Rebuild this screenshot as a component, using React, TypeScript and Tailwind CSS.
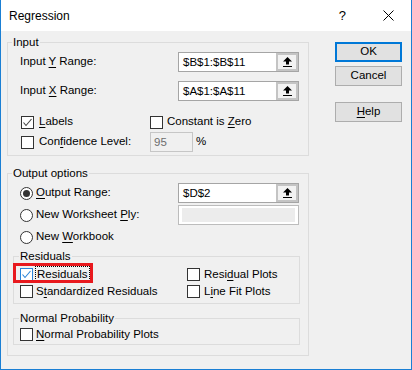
import React from "react";

const ACCENT = "#1a7fd4";

function Key({ children }: { children: React.ReactNode }) {
  return <span className="underline underline-offset-[2px] decoration-1">{children}</span>;
}

function CheckBox({ checked = false, focus = false }: { checked?: boolean; focus?: boolean }) {
  return (
    <span
      className={`w-[13px] h-[13px] shrink-0 bg-white border flex items-center justify-center ${
        focus ? "border-[#2b84d8]" : "border-[#333333]"
      }`}
    >
      {checked && (
        <svg width="11" height="11" viewBox="0 0 11 11">
          <polyline
            points="1.5,5.5 4,8.5 9.5,2"
            fill="none"
            stroke={focus ? "#2b84d8" : "#444444"}
            strokeWidth="1.1"
          />
        </svg>
      )}
    </span>
  );
}

function Radio({ checked = false }: { checked?: boolean }) {
  return (
    <span className="w-[13px] h-[13px] shrink-0 rounded-full bg-white border border-[#333333] flex items-center justify-center">
      {checked && <span className="w-[7px] h-[7px] rounded-full bg-[#333333]" />}
    </span>
  );
}

function RefButton() {
  return (
    <span className="w-[22px] h-full border-2 border-[#c4c4c4] bg-[#f2f2f2] flex items-center justify-center">
      <svg width="9" height="10" viewBox="0 0 9 10">
        <polygon points="4.5,0 9,4.5 6,4.5 6,7.5 3,7.5 3,4.5 0,4.5" fill="#000" />
        <rect x="0" y="9" width="9" height="1" fill="#000" />
      </svg>
    </span>
  );
}

function RefInput({ value }: { value: string }) {
  return (
    <div className="w-[121px] h-[20px] border border-[#a5a5a5] bg-white flex">
      <span className="flex-1 pl-[4px] leading-[18px]">{value}</span>
      <RefButton />
    </div>
  );
}

function Button({ children, primary = false }: { children: React.ReactNode; primary?: boolean }) {
  return (
    <div
      className={`w-[67px] h-[20px] bg-[#e1e1e1] flex items-center justify-center ${
        primary ? "border-2 border-[#0078d7]" : "border border-[#adadad]"
      }`}
    >
      {children}
    </div>
  );
}

export default function App() {
  return (
    <div className="w-[412px] h-[370px] bg-[#f0f0f0] border-x border-b flex flex-col text-[11.5px] text-black font-['Liberation_Sans',Arial,sans-serif]" style={{ borderColor: ACCENT }}>
      {/* title bar */}
      <div className="h-[31px] shrink-0 bg-white flex items-center pl-[8px] pr-[17px]">
        <span className="text-[12px]">Regression</span>
        <span className="ml-auto text-[13px]">?</span>
        <svg className="ml-[37px]" width="11" height="11" viewBox="0 0 11 11">
          <path d="M0.5 0.5 L10.5 10.5 M10.5 0.5 L0.5 10.5" stroke="#000" strokeWidth="1" />
        </svg>
      </div>

      <div className="flex flex-1 pl-[6px] pt-[4px]">
        {/* left column */}
        <div className="w-[302px] flex flex-col">
          <fieldset className="border border-[#dcdcdc]">
            <legend className="ml-[4px] px-px leading-[14px]">Input</legend>
            <div className="pl-[12px] pr-[9px] pt-[3px] pb-[3px]">
              <div className="h-[20px] flex items-center justify-between">
                <span>Input <Key>Y</Key> Range:</span>
                <RefInput value="$B$1:$B$11" />
              </div>
              <div className="h-[20px] mt-[9px] flex items-center justify-between">
                <span>Input <Key>X</Key> Range:</span>
                <RefInput value="$A$1:$A$11" />
              </div>
              <div className="h-[20px] mt-[11px] flex items-center">
                <div className="w-[130px] flex items-center gap-[5px] pl-[1px]">
                  <CheckBox checked />
                  <span><Key>L</Key>abels</span>
                </div>
                <div className="flex items-center gap-[4px]">
                  <CheckBox />
                  <span>Constant is <Key>Z</Key>ero</span>
                </div>
              </div>
              <div className="h-[20px] flex items-center">
                <div className="w-[130px] flex items-center gap-[5px] pl-[1px]">
                  <CheckBox />
                  <span>Con<Key>f</Key>idence Level:</span>
                </div>
                <div className="w-[43px] h-[20px] border border-[#c6c6c6] bg-[#f0f0f0] pl-[3px] leading-[18px] text-[#6d6d6d]">95</div>
                <span className="ml-[3px]">%</span>
              </div>
            </div>
          </fieldset>

          <fieldset className="mt-[10px] border border-[#dcdcdc]">
            <legend className="ml-[4px] px-px leading-[14px]">Output options</legend>
            <div className="pl-[5px] pr-[8px] pt-[2px] pb-[10px]">
              <div className="h-[22px] pl-[7px] pr-[1px] flex items-center">
                <Radio checked />
                <span className="ml-[3px]"><Key>O</Key>utput Range:</span>
                <div className="ml-auto">
                  <RefInput value="$D$2" />
                </div>
              </div>
              <div className="h-[22px] pl-[7px] pr-[1px] flex items-center">
                <Radio />
                <span className="ml-[3px]">New Worksheet <Key>P</Key>ly:</span>
                <div className="ml-auto w-[121px] h-[20px] border border-[#bcbcbc] bg-white px-[3px] py-[2px]">
                  <div className="w-full h-full bg-[#ececec]" />
                </div>
              </div>
              <div className="h-[22px] pl-[7px] flex items-center">
                <Radio />
                <span className="ml-[3px]">New <Key>W</Key>orkbook</span>
              </div>

              <fieldset className="mt-[1px] border border-[#dcdcdc]">
                <legend className="ml-[5px] px-px leading-[14px]">Residuals</legend>
                <div className="pl-[6px] pt-[3px] pb-[3px] grid grid-cols-[167px_1fr]">
                  <div className="relative h-[17px] flex items-center">
                    <CheckBox checked focus />
                    <span className="ml-[2px] h-[17px] px-px border border-dotted border-black leading-[15px]">
                      <Key>R</Key>esiduals
                    </span>
                    <div className="absolute left-[-7px] top-[-3px] w-[80px] h-[20px] border-[3px] border-[#e8191e]" />
                  </div>
                  <div className="h-[17px] flex items-center gap-[4px]">
                    <CheckBox />
                    <span>Resi<Key>d</Key>ual Plots</span>
                  </div>
                  <div className="h-[17px] flex items-center gap-[3px]">
                    <CheckBox />
                    <span>S<Key>t</Key>andardized Residuals</span>
                  </div>
                  <div className="h-[17px] flex items-center gap-[4px]">
                    <CheckBox />
                    <span>L<Key>i</Key>ne Fit Plots</span>
                  </div>
                </div>
              </fieldset>

              <fieldset className="mt-[7px] border border-[#dcdcdc]">
                <legend className="ml-[5px] px-px leading-[14px]">Normal Probability</legend>
                <div className="pl-[6px] pt-[1px] pb-[1px]">
                  <div className="h-[17px] flex items-center gap-[3px]">
                    <CheckBox />
                    <span><Key>N</Key>ormal Probability Plots</span>
                  </div>
                </div>
              </fieldset>
            </div>
          </fieldset>
        </div>

        {/* right column buttons */}
        <div className="ml-[26px] pt-[7px] flex flex-col">
          <Button primary>OK</Button>
          <div className="mt-[4px]">
            <Button>Cancel</Button>
          </div>
          <div className="mt-[16px]">
            <Button>
              <span><Key>H</Key>elp</span>
            </Button>
          </div>
        </div>
      </div>
    </div>
  );
}
